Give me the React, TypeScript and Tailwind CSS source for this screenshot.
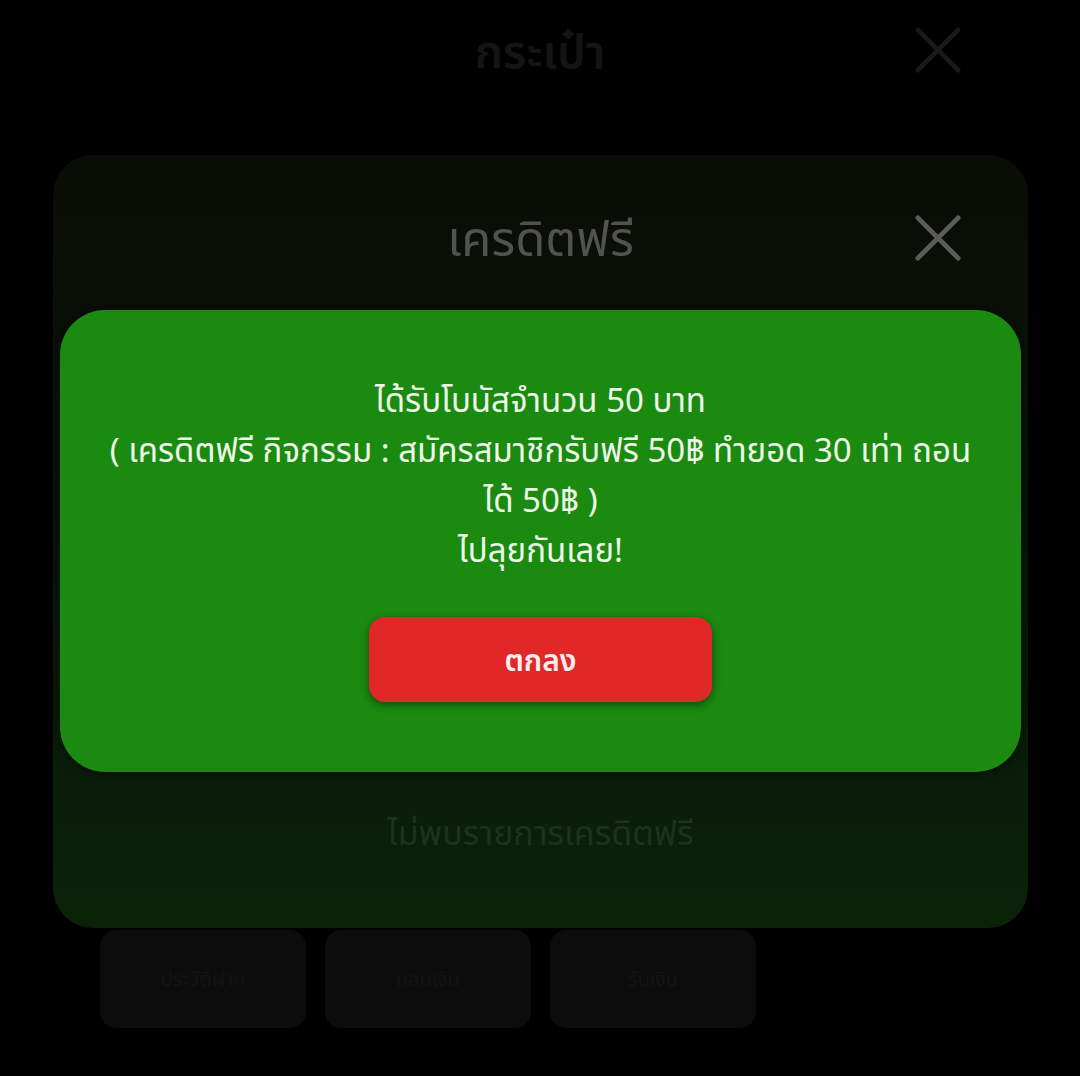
import React from "react";

const CloseIcon = ({ className }: { className?: string }) => (
  <svg viewBox="0 0 50 50" className={className} fill="none" stroke="currentColor" strokeWidth="5" strokeLinecap="round">
    <path d="M4 4 L46 46 M46 4 L4 46" />
  </svg>
);

const tiles = ["ประวัติฝาก", "ถอนเงิน", "รับเงิน"];

export default function App() {
  return (
    <div className="relative h-[1076px] w-[1080px] overflow-hidden bg-black font-['Noto_Sans','Noto_Sans_Thai',sans-serif]">
      {/* wallet header (dimmed) */}
      <div className="relative flex h-[100px] items-center justify-center">
        <span className="text-[46px] font-semibold text-[#141414]">กระเป๋า</span>
        <CloseIcon className="absolute right-[118px] top-[26px] h-[48px] w-[48px] text-[#191919]" />
      </div>

      {/* free credit panel (dimmed) */}
      <div className="ml-[53px] mr-[52px] mt-[55px] flex h-[773px] flex-col rounded-[40px] bg-gradient-to-b from-[#0a0c06] via-[#08160a] to-[#0b2208]">
        <div className="relative flex h-[166px] items-center justify-center">
          <span className="text-[49px] text-[#525252]">เครดิตฟรี</span>
          <CloseIcon className="absolute right-[66px] top-[59px] h-[48px] w-[48px] text-[#5c5c5c]" />
        </div>
        <div className="mx-[46px] flex flex-1 flex-col items-center rounded-[30px] pt-[486px]">
          <span className="text-[34px] text-[#1c3419]">ไม่พบรายการเครดิตฟรี</span>
        </div>
      </div>

      {/* bottom tiles (dimmed) */}
      <div className="ml-[100px] mt-[2px] flex gap-[19px]">
        {tiles.map((t) => (
          <div key={t} className="flex h-[98px] w-[206px] items-center justify-center rounded-[16px] bg-[#0c0c0c]">
            <span className="text-[20px] text-[#131313]">{t}</span>
          </div>
        ))}
      </div>

      {/* bonus popup */}
      <div className="absolute left-[60px] top-[310px] flex h-[462px] w-[961px] flex-col items-center rounded-[45px] bg-[#1b8a10] pt-[65px] shadow-[0_0_12px_rgba(0,0,0,0.6)]">
        <div className="px-[36px] text-center text-[33px] leading-[50px] text-[#eef8e8]">
          <p>ได้รับโบนัสจำนวน 50 บาท</p>
          <p>( เครดิตฟรี กิจกรรม : สมัครสมาชิกรับฟรี 50฿ ทำยอด 30 เท่า ถอน ได้ 50฿ )</p>
          <p>ไปลุยกันเลย!</p>
        </div>
        <button className="mt-[42px] flex h-[85px] w-[343px] items-center justify-center rounded-[16px] bg-[#e02828] text-[30px] font-semibold text-[#fdeeee] shadow-[0_3px_8px_rgba(0,0,0,0.45)]">
          ตกลง
        </button>
      </div>
    </div>
  );
}
